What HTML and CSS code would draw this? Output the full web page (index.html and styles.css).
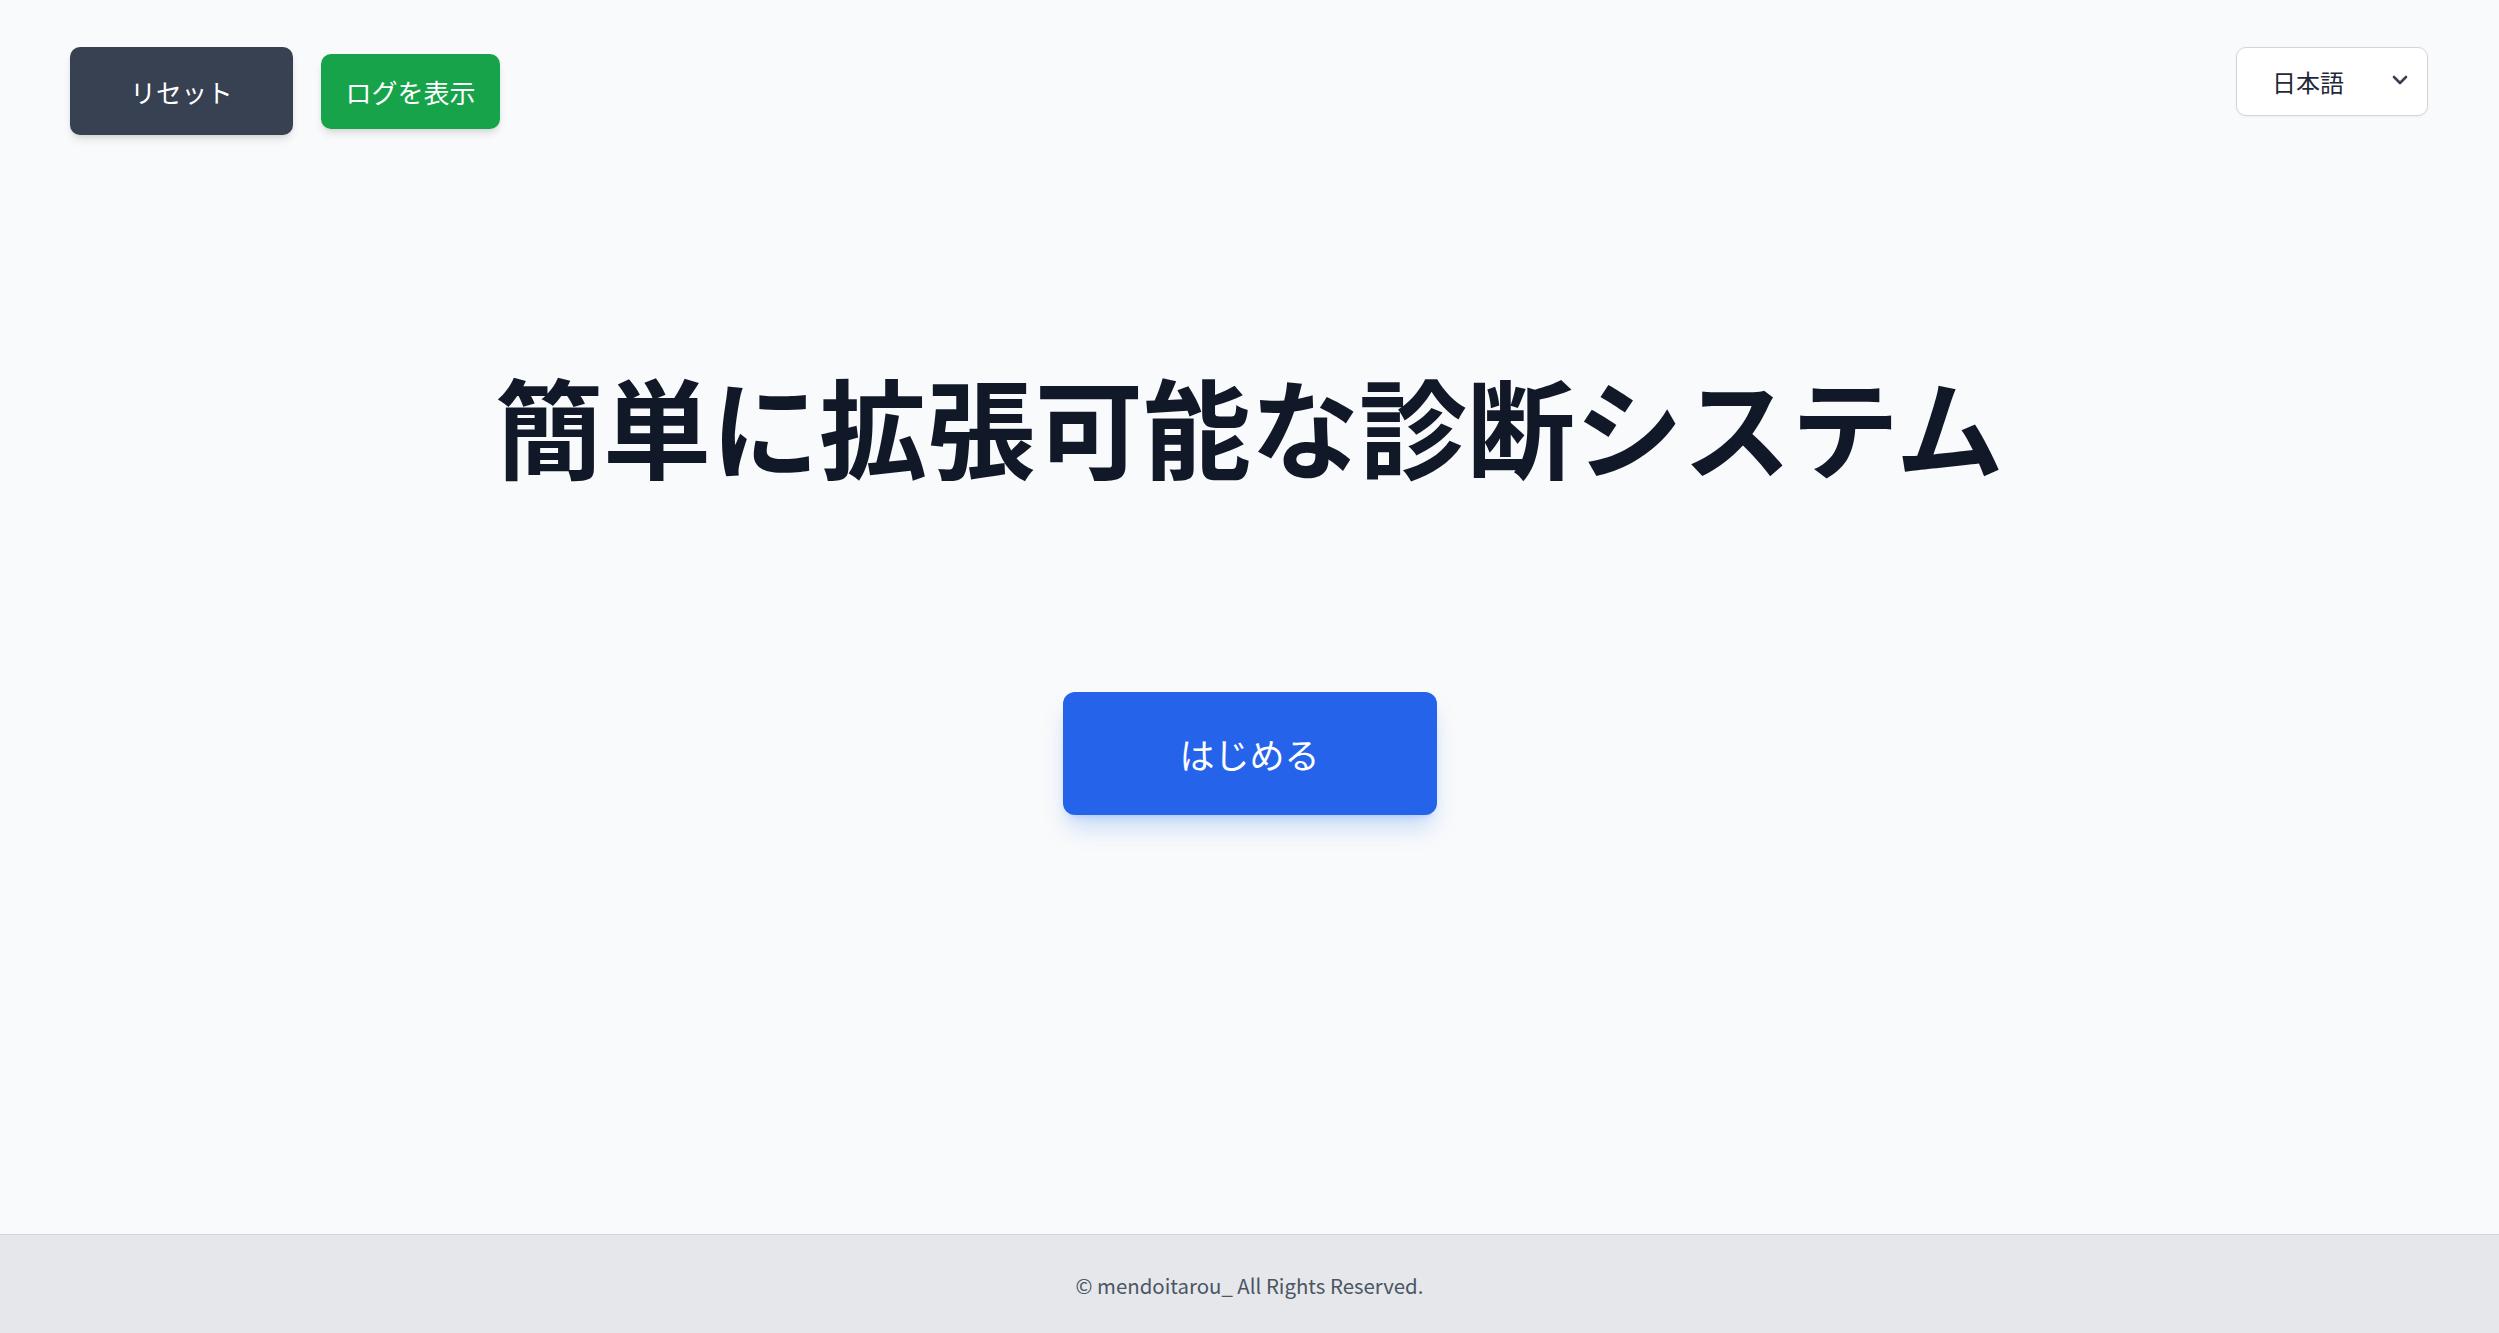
FILE: index.html
```html
<!DOCTYPE html>
<html lang="ja">
<head>
<meta charset="utf-8">
<title>簡単に拡張可能な診断システム</title>
<link rel="stylesheet" href="styles.css">
</head>
<body>
<div class="page">
  <header class="topbar">
    <div class="actions">
      <button class="btn btn-reset">リセット</button>
      <button class="btn btn-log">ログを表示</button>
    </div>
    <div class="lang-select">
      <span class="lang-label">日本語</span>
      <svg class="chevron" width="16" height="10" viewBox="0 0 16 10" aria-hidden="true">
        <path d="M2 2 L8 8 L14 2" fill="none" stroke="#374151" stroke-width="2.6" stroke-linecap="round" stroke-linejoin="round"/>
      </svg>
    </div>
  </header>
  <main class="hero">
    <h1 class="title">簡単に拡張可能な診断システム</h1>
    <button class="btn btn-start">はじめる</button>
  </main>
  <footer class="footer">
    <p class="copy">© mendoitarou_ All Rights Reserved.</p>
  </footer>
</div>
</body>
</html>
```
FILE: styles.css
```css
* { box-sizing: border-box; }
html, body { margin: 0; padding: 0; }
body {
  background: #f9fafb;
  font-family: "Noto Sans CJK JP", "Noto Sans", sans-serif;
  color: #111827;
}
.page {
  min-height: 100vh;
  display: flex;
  flex-direction: column;
}
.topbar {
  display: flex;
  justify-content: space-between;
  align-items: flex-start;
  padding: 47px 71px 0 70px;
}
.actions {
  display: flex;
  align-items: center;
  gap: 28px;
}
.btn {
  border: none;
  font-family: "Noto Sans CJK JP", "Noto Sans", sans-serif;
  color: #ffffff;
  cursor: pointer;
  display: flex;
  align-items: center;
  justify-content: center;
  padding: 0;
}
.btn-reset {
  width: 223px;
  height: 88px;
  background: #374151;
  border-radius: 10px;
  font-size: 25.6px;
  box-shadow: 0 6px 10px -2px rgba(0,0,0,0.12), 0 2px 5px -2px rgba(0,0,0,0.1);
}
.btn-log {
  width: 179px;
  height: 75px;
  background: #16a34a;
  border-radius: 10px;
  font-size: 26px;
  box-shadow: 0 6px 10px -2px rgba(0,0,0,0.12), 0 2px 5px -2px rgba(0,0,0,0.1);
}
.lang-select {
  width: 192px;
  height: 69px;
  background: #ffffff;
  border: 1.5px solid #d1d5db;
  border-radius: 10px;
  display: flex;
  align-items: center;
  justify-content: space-between;
  padding: 0 19px 0 35px;
  box-shadow: 0 1px 3px rgba(0,0,0,0.05);
}
.lang-label {
  font-size: 24px;
  color: #1f2937;
  line-height: 1;
}
.chevron {
  display: block;
  margin-top: -3px;
}
.hero {
  flex: 1;
  display: flex;
  flex-direction: column;
  align-items: center;
}
.title {
  margin: 235px 0 0 0;
  font-size: 108px;
  line-height: 1;
  font-weight: 700;
  color: #111827;
  letter-spacing: 0;
}
.btn-start {
  margin-top: 214px;
  width: 374px;
  height: 123px;
  background: #2563eb;
  border-radius: 12px;
  font-size: 35px;
  box-shadow: 0 16px 24px -5px rgba(59,130,246,0.28), 0 6px 10px -6px rgba(59,130,246,0.3);
}
.footer {
  height: 99px;
  background: #e5e7eb;
  border-top: 1.5px solid #d1d5db;
  display: flex;
  align-items: center;
  justify-content: center;
  padding-top: 2px;
}
.copy {
  margin: 0;
  font-size: 20.4px;
  color: #4b5563;
  line-height: 1;
}
```
